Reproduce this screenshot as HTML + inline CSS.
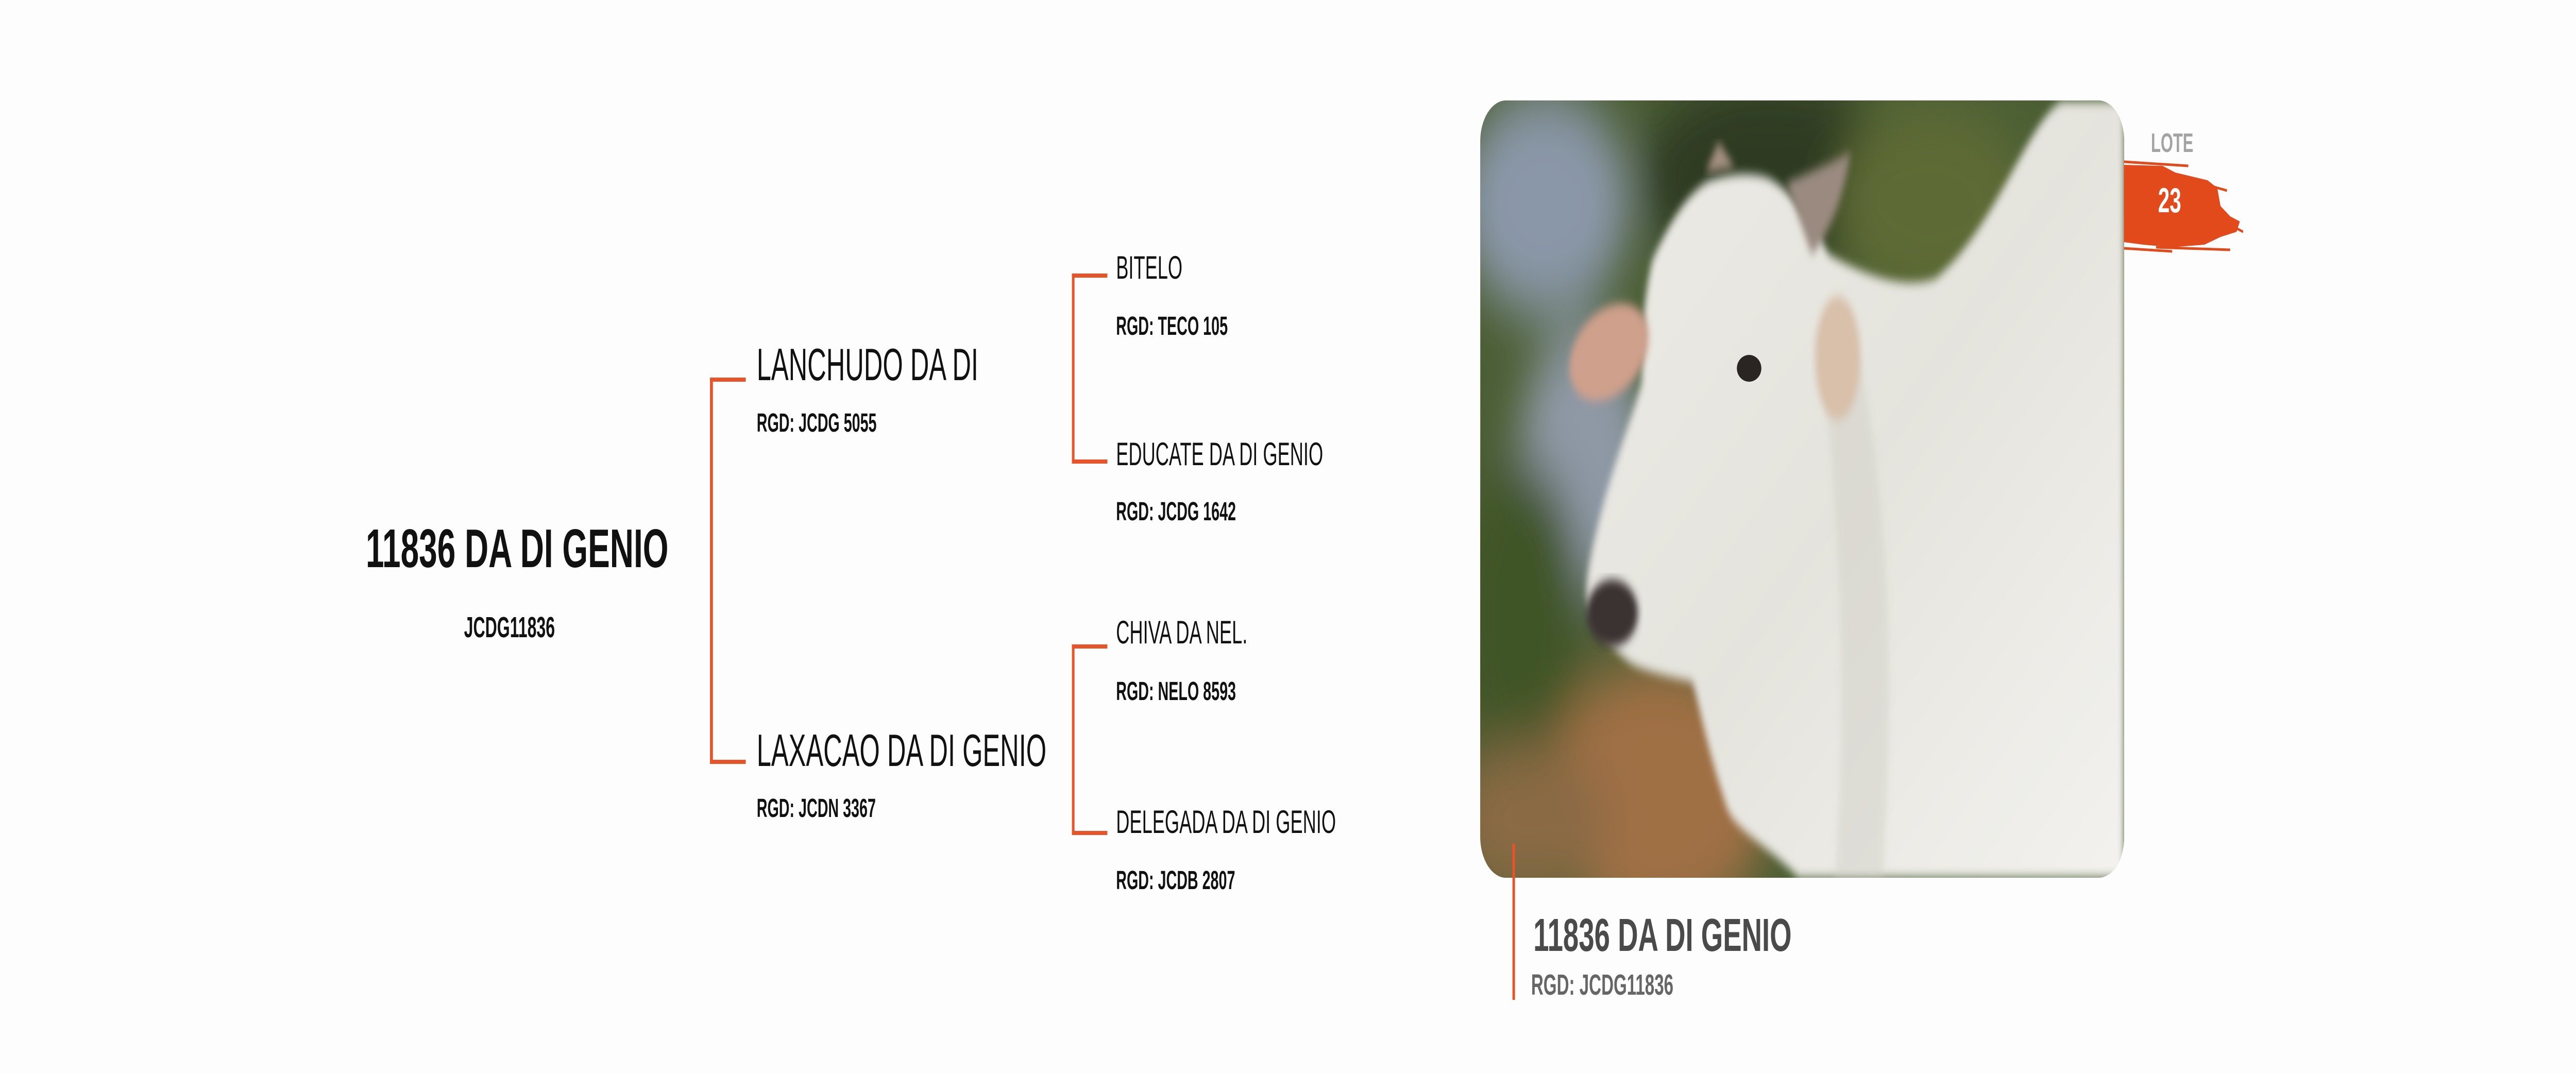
<!DOCTYPE html>
<html><head><meta charset="utf-8"><style>
*{margin:0;padding:0}
html,body{overflow:hidden;background:#fdfdfd}
.w{position:absolute;left:0;top:0;width:8000px;height:2083px;background:#fdfdfd;font-family:"Liberation Sans",sans-serif;transform-origin:0 0;transform:scale(0.625);overflow:hidden}
@media (max-width:5010px) and (min-height:2000px){.w{transform:scale(0.625,1)}}
@media (min-width:7990px){.w{transform:none}}
.t{position:absolute;white-space:nowrap;line-height:1;transform-origin:0 0;color:#111}
.ln{position:absolute;background:#e8532a}
</style></head><body><div class="w">
<div class="t" style="left:1136px;top:1012px;font-size:106px;font-weight:bold;transform:scaleX(0.965)">11836 DA DI GENIO</div>
<div class="t" style="left:1441px;top:1190px;font-size:57px;font-weight:bold;transform:scaleX(0.9)">JCDG11836</div>
<div class="ln" style="left:2205px;top:733px;width:9px;height:750px"></div>
<div class="ln" style="left:2205px;top:733px;width:111px;height:8px"></div>
<div class="ln" style="left:2205px;top:1475px;width:111px;height:8px"></div>
<div class="t" style="left:2350px;top:664px;font-size:88px;transform:scaleX(0.92)">LANCHUDO DA DI</div>
<div class="t" style="left:2350px;top:795px;font-size:51px;font-weight:bold;transform:scaleX(0.9)">RGD: JCDG 5055</div>
<div class="t" style="left:2350px;top:1413px;font-size:88px;transform:scaleX(0.92)">LAXACAO DA DI GENIO</div>
<div class="t" style="left:2350px;top:1543px;font-size:51px;font-weight:bold;transform:scaleX(0.9)">RGD: JCDN 3367</div>
<div class="ln" style="left:3329px;top:531px;width:8px;height:369px"></div>
<div class="ln" style="left:3329px;top:531px;width:110px;height:8px"></div>
<div class="ln" style="left:3329px;top:892px;width:110px;height:8px"></div>
<div class="t" style="left:3466px;top:489px;font-size:63px;transform:scaleX(0.92)">BITELO</div>
<div class="t" style="left:3466px;top:607px;font-size:51px;font-weight:bold;transform:scaleX(0.9)">RGD: TECO 105</div>
<div class="t" style="left:3466px;top:851px;font-size:63px;transform:scaleX(0.92)">EDUCATE DA DI GENIO</div>
<div class="t" style="left:3466px;top:967px;font-size:51px;font-weight:bold;transform:scaleX(0.9)">RGD: JCDG 1642</div>
<div class="ln" style="left:3329px;top:1251px;width:8px;height:370px"></div>
<div class="ln" style="left:3329px;top:1251px;width:110px;height:8px"></div>
<div class="ln" style="left:3329px;top:1613px;width:110px;height:8px"></div>
<div class="t" style="left:3466px;top:1197px;font-size:63px;transform:scaleX(0.92)">CHIVA DA NEL.</div>
<div class="t" style="left:3466px;top:1316px;font-size:51px;font-weight:bold;transform:scaleX(0.9)">RGD: NELO 8593</div>
<div class="t" style="left:3466px;top:1565px;font-size:63px;transform:scaleX(0.92)">DELEGADA DA DI GENIO</div>
<div class="t" style="left:3466px;top:1683px;font-size:51px;font-weight:bold;transform:scaleX(0.9)">RGD: JCDB 2807</div>

<svg style="position:absolute;left:4597px;top:195px" width="2000" height="1509" viewBox="0 0 2000 1509">
<defs>
<clipPath id="c"><rect width="2000" height="1509" rx="80"/></clipPath>
<filter id="b" x="-20%" y="-20%" width="140%" height="140%"><feGaussianBlur stdDeviation="60"/></filter>
<filter id="s"><feGaussianBlur stdDeviation="10"/></filter>
<linearGradient id="cw" x1="0" y1="0" x2="1" y2="1"><stop offset="0" stop-color="#ecebe6"/><stop offset="0.5" stop-color="#e4e3dd"/><stop offset="1" stop-color="#f3f2ee"/></linearGradient>
</defs>
<g clip-path="url(#c)">
<rect width="2000" height="1509" fill="#4b5e34"/>
<g filter="url(#b)">
<ellipse cx="200" cy="200" rx="260" ry="220" fill="#8a97a8"/>
<ellipse cx="320" cy="700" rx="200" ry="260" fill="#8f99a6"/>
<ellipse cx="900" cy="150" rx="400" ry="200" fill="#2f3b22"/>
<ellipse cx="1400" cy="200" rx="300" ry="200" fill="#5d6a34"/>
<ellipse cx="120" cy="1000" rx="200" ry="300" fill="#3f5526"/>
<ellipse cx="550" cy="1350" rx="350" ry="260" fill="#a06f45"/>
<ellipse cx="150" cy="1400" rx="250" ry="150" fill="#8a6a45"/>
</g>
<path filter="url(#s)" d="M1083 299 C1250 360 1350 360 1413 346 C1600 250 1700 40 1806 2 L2000 2 L2000 1509 L989 1509 C900 1450 800 1420 769 1378 C700 1250 680 1170 659 1129 C600 1120 520 1110 471 1094 C400 1060 340 1010 330 963 C330 920 340 900 345 880 C400 720 460 640 502 548 C500 450 510 380 534 311 C600 220 650 180 707 157 C780 140 850 140 895 151 C980 180 1040 250 1083 299 Z" fill="url(#cw)"/>
<path d="M1150 420 C1250 700 1300 1000 1250 1509 L1100 1509 C1150 1100 1100 700 1050 450 Z" fill="#d2d0c8" opacity="0.5" filter="url(#s)"/>
<ellipse cx="400" cy="489" rx="130" ry="85" transform="rotate(-25 400 489)" fill="#cfa08c" filter="url(#s)"/>
<ellipse cx="1110" cy="500" rx="70" ry="120" fill="#d8c0aa" filter="url(#s)"/>
<path d="M950 160 C1020 140 1100 120 1150 100 C1130 180 1100 240 1030 300 Z" fill="#9a8a80" filter="url(#s)"/>
<path d="M700 140 L740 80 L790 130 Z" fill="#a59080" filter="url(#s)"/>
<ellipse cx="410" cy="995" rx="80" ry="65" fill="#3a3230" filter="url(#s)"/>
<ellipse cx="835" cy="520" rx="38" ry="26" fill="#2a2422"/>
</g>
</svg>

<svg style="position:absolute;left:6596px;top:310px" width="380" height="185" viewBox="0 0 380 185">
<path d="M0 10 L120 12 L160 25 L260 40 L290 55 L300 90 L330 110 L360 120 L350 140 L300 150 L250 165 L150 170 L60 165 L0 160 Z" fill="#e2491b"/>
<g stroke="#e2491b" stroke-width="5">
<line x1="0" y1="4" x2="200" y2="12"/><line x1="150" y1="30" x2="320" y2="60"/><line x1="250" y1="100" x2="370" y2="140"/><line x1="100" y1="170" x2="330" y2="175"/><line x1="0" y1="172" x2="150" y2="178"/>
</g>
</svg>
<div class="t" style="left:6680px;top:252px;font-size:52px;font-weight:bold;color:#a3a3a3;transform:scaleX(0.95)">LOTE</div>
<div class="t" style="left:6702px;top:355px;font-size:68px;font-weight:bold;color:#fff;transform:scaleX(0.95)">23</div>

<div class="ln" style="left:4697px;top:1638px;width:8px;height:303px"></div>
<div class="t" style="left:4762px;top:1771px;font-size:90px;font-weight:bold;color:#4a4a4a;transform:scaleX(0.97)">11836 DA DI GENIO</div>
<div class="t" style="left:4755px;top:1884px;font-size:57px;font-weight:bold;color:#666;transform:scaleX(0.93)">RGD: JCDG11836</div>
</div></body></html>
